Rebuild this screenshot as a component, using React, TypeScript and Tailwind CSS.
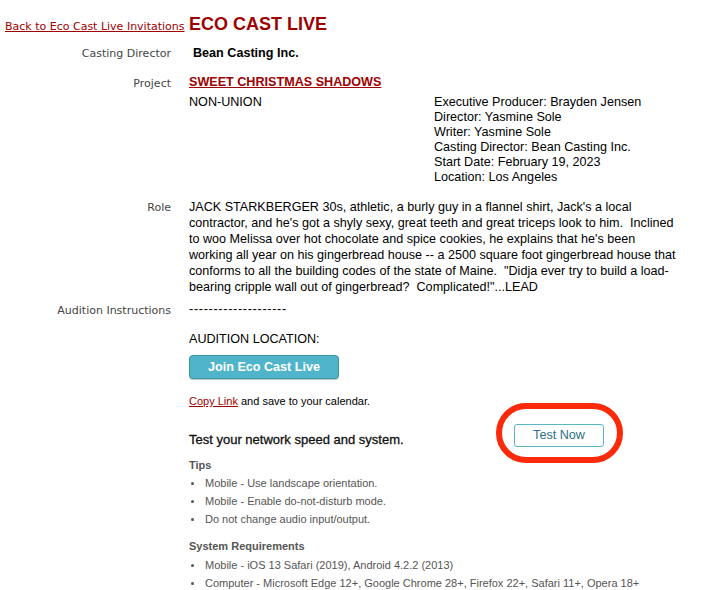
import React from 'react';

const verdana = { fontFamily: '"DejaVu Sans", Verdana, sans-serif' };

function Label({ children }: { children: React.ReactNode }) {
  return (
    <div className="pr-[18px] text-right text-[11px] text-[#444] [font-family:'DejaVu_Sans',Verdana,sans-serif]">
      {children}
    </div>
  );
}

const credits = [
  'Executive Producer: Brayden Jensen',
  'Director: Yasmine Sole',
  'Writer: Yasmine Sole',
  'Casting Director: Bean Casting Inc.',
  'Start Date: February 19, 2023',
  'Location: Los Angeles',
];

const tips = [
  'Mobile - Use landscape orientation.',
  'Mobile - Enable do-not-disturb mode.',
  'Do not change audio input/output.',
];

const requirements = [
  'Mobile - iOS 13 Safari (2019), Android 4.2.2 (2013)',
  'Computer - Microsoft Edge 12+, Google Chrome 28+, Firefox 22+, Safari 11+, Opera 18+',
];

function BulletList({ items, className = '' }: { items: string[]; className?: string }) {
  return (
    <ul className={`space-y-[5px] ${className}`}>
      {items.map(item => (
        <li key={item} className="flex items-center leading-[13px] text-[11px] text-[#555]">
          <span className="ml-[2px] mr-[11px] h-[3px] w-[3px] rounded-full bg-[#555]" />
          {item}
        </li>
      ))}
    </ul>
  );
}

export default function App() {
  return (
    <div className="min-h-[590px] w-[708px] bg-white pt-[14px] text-[12.6px] leading-[15px] text-black [font-family:'Liberation_Sans',Arial,sans-serif]">
      <div className="grid grid-cols-[189px_1fr] items-baseline">
        <div className="pl-[5px] text-[11px] whitespace-nowrap" style={verdana}>
          <a href="#" className="text-[#a00000] underline">Back to Eco Cast Live Invitations</a>
        </div>
        <div className="text-[18px] font-bold leading-[20px] text-[#9c0000]">ECO CAST LIVE</div>
      </div>

      <div className="mt-[12px] grid grid-cols-[189px_1fr] items-baseline">
        <Label>Casting Director</Label>
        <div className="pl-1 font-bold">Bean Casting Inc.</div>
      </div>

      <div className="mt-[14px] grid grid-cols-[189px_1fr]">
        <div className="pt-[1px]">
          <Label>Project</Label>
        </div>
        <div>
          <a href="#" className="font-bold text-[#a00000] underline">SWEET CHRISTMAS SHADOWS</a>
          <div className="mt-[5px] flex">
            <div className="w-[245px]">NON-UNION</div>
            <div>
              {credits.map(c => (
                <div key={c}>{c}</div>
              ))}
            </div>
          </div>
        </div>
      </div>

      <div className="mt-[14px] grid grid-cols-[189px_1fr]">
        <div className="pt-[1px]">
          <Label>Role</Label>
        </div>
        <div className="w-[490px] leading-[16px] whitespace-pre-wrap">
          {"JACK STARKBERGER 30s, athletic, a burly guy in a flannel shirt, Jack's a local contractor, and he's got a shyly sexy, great teeth and great triceps look to him.  Inclined to woo Melissa over hot chocolate and spice cookies, he explains that he's been working all year on his gingerbread house -- a 2500 square foot gingerbread house that conforms to all the building codes of the state of Maine.  \"Didja ever try to build a load-bearing cripple wall out of gingerbread?  Complicated!\"...LEAD"}
        </div>
      </div>

      <div className="mt-[7px] grid grid-cols-[189px_1fr]">
        <div className="pt-[1px]">
          <Label>Audition Instructions</Label>
        </div>
        <div>
          <div className="tracking-[0.7px]">--------------------</div>
          <div className="mt-[15px]">AUDITION LOCATION:</div>
          <button className="mt-[8px] block h-[24px] w-[150px] rounded-[4px] border border-[#3d95a8] bg-[#50b4cb] text-[12.6px] font-bold text-white shadow-[0_1px_1px_rgba(0,0,0,0.25)]">
            Join Eco Cast Live
          </button>
          <div className="mt-[15px] text-[11px]">
            <a href="#" className="text-[#a00000] underline">Copy Link</a> and save to your calendar.
          </div>

          <div className="mt-[15px] flex items-start">
            <div className="mt-[8px] w-[325px] text-[13px] text-[#111] [-webkit-text-stroke:0.3px_#111]">Test your network speed and system.</div>
            <div className="relative">
              <button className="block h-[23px] w-[90px] rounded-[3px] border border-[#5ab4c8] bg-white text-[12.6px] text-[#2b6f82]">
                Test Now
              </button>
              <div className="absolute left-[-18px] top-[-21px] h-[60px] w-[127px] rounded-full border-[6px] border-[#fa2a0a]" />
            </div>
          </div>

          <div className="mt-[12px] text-[11px] font-bold leading-[13px] text-[#555]">Tips</div>
          <BulletList items={tips} className="mt-[5px]" />

          <div className="mt-[14px] text-[11px] font-bold leading-[13px] text-[#555]">System Requirements</div>
          <BulletList items={requirements} className="mt-[6px]" />
        </div>
      </div>
    </div>
  );
}
